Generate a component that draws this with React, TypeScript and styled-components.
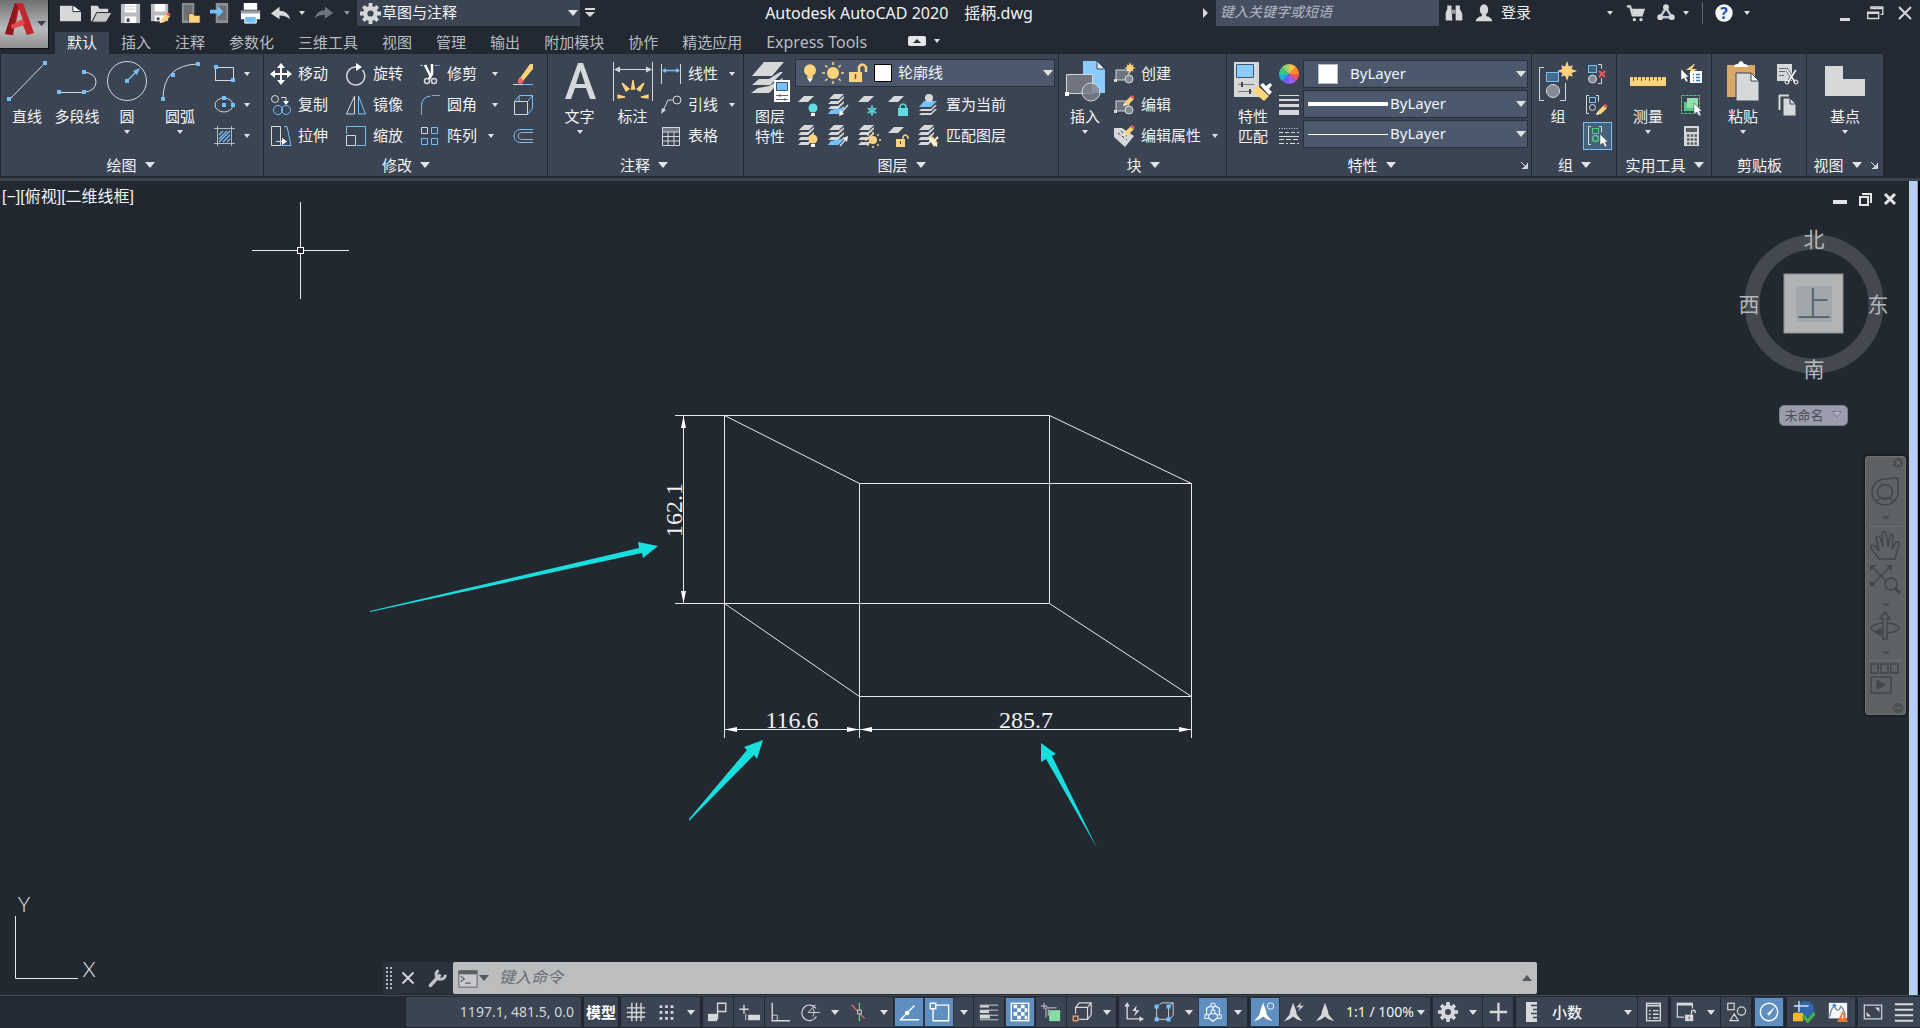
import React from "react";
import styled, { createGlobalStyle, css } from "styled-components";

const c = {
  chrome: "#222933",
  canvas: "#212830",
  panel: "#3b4453",
  combo: "#4c596d",
  line: "#222933",
  text: "#f2f3f4",
  tab: "#b9bcc0",
  g: "#d6d8da",
  b: "#74c0f8",
  y: "#ffd27c",
  active: "#5f8ec1",
};

const Global = createGlobalStyle`
  * { box-sizing: border-box; }
  body { margin: 0; background: ${c.canvas}; overflow: hidden; }
  body, button, input, select {
    font-family: "Noto Sans", "Noto Sans CJK SC", sans-serif;
    font-size: 15px;
    line-height: 20px;
    color: ${c.text};
  }
  button { background: none; border: 0; padding: 0; cursor: default; white-space: nowrap; }
  svg { display: block; flex: none; }
`;

/* ---------- icons ---------- */

const G = c.g;
const B = c.b;
const Y = c.y;

const dot = (x: number, y: number, s = 4) => (
  <rect x={x - s / 2} y={y - s / 2} width={s} height={s} fill={B} stroke="none" />
);
const sheet = (y: number, fill = G) => (
  <path d={`M7 ${y}h10l-6 6H1z`} fill={fill} stroke="none" />
);
const sheets = (
  <>
    <path d="M7 1h10l-5 5H2z" fill={G} stroke="none" />
    <path d="M4 8l-3 3h10l6-6v-2l-6 5zM4 13l-3 3h10l6-6v-2l-6 5zM4 18l-3 3h10l6-6v-2l-6 5z" fill={G} stroke="none" />
  </>
);
const sun = (x: number, y: number, r: number, k: number) => (
  <g>
    <circle cx={x} cy={y} r={r} fill={Y} stroke="none" />
    <path
      stroke={Y}
      strokeWidth="1.500"
      d={Array.from({ length: 8 }, (_, i) => {
        const a = (i * Math.PI) / 4;
        const s = Math.sin(a);
        const t = Math.cos(a);
        return `M${x + (r + 2) * s} ${y + (r + 2) * t}L${x + k * s} ${y + k * t}`;
      }).join("")}
    />
  </g>
);
const pencil = (x: number, y: number) => (
  <g transform={`translate(${x} ${y})`} stroke="none">
    <path d="M0 10l2-4 6-6 3 3-6 6z" fill={Y} />
    <path d="M7 1l1.500-1.500q2-1 3 1.500l-1.500 2z" fill="#f0585c" />
    <path d="M0 10l1.500-3 1.500 1.500z" fill="#fff" />
  </g>
);
const pointer = (x: number, y: number) => (
  <path transform={`translate(${x} ${y})`} d="M0 0v11l3-2 2 4 2-1-2-4h3z" fill="#fff" stroke={c.panel} strokeWidth=".5" />
);
const star = (x: number, y: number, r: number) => {
  const pts = Array.from({ length: 16 }, (_, i) => {
    const a = (i * Math.PI) / 8;
    const k = i % 2 ? r * 0.5 : i % 4 ? r * 0.82 : r;
    return `${(x + k * Math.sin(a)).toFixed(1)},${(y - k * Math.cos(a)).toFixed(1)}`;
  }).join(" ");
  return <polygon points={pts} fill={Y} stroke="none" />;
};
const block = (
  <>
    <rect x="4" y="8" width="13" height="10" fill="#6d7380" />
    <circle cx="17" cy="17" r="4" fill="#858b95" />
    <rect x="2" y="17" width="3" height="3" fill={G} stroke="none" />
  </>
);
const gear = (fill: string) => (
  <g>
    <circle cx="12" cy="12" r="5.500" fill="none" stroke={fill} strokeWidth="4.500" />
    <path
      stroke={fill}
      strokeWidth="4"
      d="M12 1v5M12 18v5M1 12h5M18 12h5M4.500 4.500l3 3M16.500 16.500l3 3M4.500 19.500l3-3M16.500 7.500l3-3"
    />
  </g>
);
const compass = <path d="M12 2l3 8 1 5 6 7-6-2-4-3-4 3-6 2 6-7 1-5z" fill="currentColor" stroke="none" />;

const small: Record<string, React.ReactNode> = {
  rect: (<><rect x="3.500" y="5.500" width="18" height="13" />{dot(4, 5)}{dot(21, 18)}</>),
  ellipse: (<><ellipse cx="12" cy="12" rx="9" ry="7" />{dot(12, 5)}{dot(12, 12)}{dot(21, 12)}</>),
  hatch: (<><path d="M5.500 2v20M19.500 2v20M2 4.500h21M2 19.500h21" stroke="#b4b9c0" /><path d="M7 11l4-4M7 15l8-8M7 18l11-11M11 18l7-7M15 18l3-3" stroke={B} strokeWidth="1.300" /></>),
  move: (<><path d="M12 4v16M4 12h16" strokeWidth="2" stroke="#fff" /><path d="M12 1l4 5H8zM12 23l4-5H8zM1 12l5-4v8zM23 12l-5-4v8z" fill="#fff" stroke="none" /></>),
  rotate: (<><path d="M18.500 7A9 9 0 1 1 12 4" transform="translate(0 1)" strokeWidth="1.500" /><path d="M12 1l6 4-6 4z" fill="#fff" stroke="none" /></>),
  trim: (<><path d="M2 3.500h7M17 3.500h5" stroke={B} strokeDasharray="3 1" /><path d="M7 3l6 12M14 2v10l-3 5" stroke="#fff" strokeWidth="2.500" /><circle cx="9" cy="19" r="2.500" strokeWidth="1.500" /><circle cx="16" cy="19" r="2.500" strokeWidth="1.500" /></>),
  erase: (<><path d="M9 16L19 2h3v5L12 19z" fill={Y} stroke="none" /><path d="M9 15l4 4q-2 4-6 2-1-3 2-6z" fill="#f2666a" stroke="none" /><path d="M2 22.500h10" /><path d="M12 22.500h10" stroke={B} /></>),
  copy: (<><circle cx="6" cy="6" r="3.500" /><path d="M12 4.500h5v4" /><path d="M14 8h6l-3 4z" fill="#fff" stroke="none" /><circle cx="9" cy="17" r="4.500" stroke={B} /><circle cx="17" cy="17" r="4.500" stroke={B} /></>),
  mirror: (<><path d="M10.500 3v18H2.500z" /><path d="M14.500 3v18h7z" stroke={B} /></>),
  fillet: (<><path d="M3.500 22v-9q0-9 9-10" stroke={B} /><path d="M3.500 22v-8M14 2.500h8" stroke="#98a4b2" /></>),
  box: (<><path d="M3.500 8.500h13v13h-13z" /><path d="M3.500 8.500l5-6h13v13l-5 6M16.500 8.500l5-6M8 8V3" stroke={B} /></>),
  stretch: (<><path d="M2.500 2.500h9v19h-9z" /><path d="M15 2.500h3l4 19H12" stroke={B} /><path d="M7 17.500h8" /><path d="M13 14l5 3.500-5 3.500z" fill="#fff" stroke="none" /></>),
  scale: (<><path d="M2.500 10V2.500h19v19h-9" stroke={B} /><path d="M2.500 11.500h9v10h-9z" /></>),
  array: (<><path d="M3.500 3.500h6v6h-6z" /><path d="M13.500 3.500h6v6h-6zM3.500 14.500h6v6h-6zM13.500 14.500h6v6h-6z" stroke={B} /></>),
  offset: (<><path d="M22 5.500H9q-6 1-6 6.500t6 6.500h13" stroke={B} /><path d="M22 8.500H11q-4 0-4 3.500t4 3.500h11" stroke="#aab0b8" /></>),
  linear: (<><path d="M2.500 2v20M21.500 2v20" /><path d="M4 8.500h16" stroke={B} strokeWidth="1.500" /><path d="M3 8.500l4-2.500v5zM21 8.500l-4-2.500v5z" fill={B} stroke="none" /></>),
  leader: (<><circle cx="18" cy="7" r="4" /><path d="M14 7H9l-5 11" /><path d="M2 21l1-6 4 2z" fill={G} stroke="none" /></>),
  table: (<><path d="M3.500 3.500h17v4.500h-17z" fill="#727a85" /><path d="M3.500 3.500h17v18h-17zM3.500 12.500h17M3.500 17h17M9 8v13M15 8v13" /></>),
  layOff: (<>{sheet(3)}<circle cx="16" cy="15" r="4.500" fill="#5fdbe4" stroke="none" /><path d="M14 20h4v3h-4z" fill="#fff" stroke="none" /></>),
  layIso: (<>{sheets}<path d="M4 17l-3 4h10l6-6h-3z" fill={B} stroke="none" /><path d="M21 12l-7 8" strokeWidth="1.500" /><path d="M12 23l1-6 4 4z" fill="#fff" stroke="none" /></>),
  layFreeze: (<>{sheet(3)}<path d="M15 12v11M10.500 15l9 5M10.500 20l9-5" stroke="#5fdbe4" strokeWidth="1.300" /><circle cx="15" cy="17.500" r="3" stroke="#5fdbe4" /></>),
  layLock: (<>{sheet(3)}<path d="M11 15h10v8H11z" fill="#5fdbe4" stroke="none" /><path d="M13 15v-2q3-4 6 0v2" stroke="#5fdbe4" strokeWidth="1.500" /></>),
  layCur: (<><path d="M7 8h13l-6 6H2z" fill={B} stroke="none" /><circle cx="12" cy="5" r="4" fill={G} stroke="none" /><path d="M4 16l-2 2h12l6-6h-2l-4 4zM4 20l-2 2h12l6-6h-2l-4 4z" fill={G} stroke="none" /></>),
  layOn: (<>{sheets}<circle cx="16" cy="15" r="4.500" fill={Y} stroke="none" /><path d="M14 20h4v3h-4z" fill="#fff" stroke="none" /></>),
  layUniso: (<>{sheets}<path d="M4 17l-3 4h10l6-6h-3z" fill={B} stroke="none" /><path d="M13 22l6-7" strokeWidth="1.500" /><path d="M21 12l-1 6-4-4z" fill="#fff" stroke="none" /></>),
  layThaw: (<>{sheets}{sun(16, 16, 4, 8)}</>),
  layUnlock: (<>{sheet(3)}<path d="M9 15h9v8H9z" fill={Y} stroke="none" /><path d="M16 15v-2q2-4 5 0v2" stroke={Y} strokeWidth="1.500" /><path d="M13.500 17v3" stroke={c.panel} /></>),
  layMatch: (<>{sheets}<path d="M11 14l4-2 6 7-4 4z" fill={Y} stroke="none" /><path d="M12 14l8 8M21 13l-4 4" stroke="#fff" strokeWidth="2" /></>),
  create: (<>{block}{star(18, 6, 6)}</>),
  editBlock: (<>{block}{pencil(11, 3)}</>),
  editAttr: (<><path d="M2 4h8l12 8-9 11L2 13z" fill={G} stroke="none" /><path d="M6 9l9 7M9 7l7 6" stroke={c.panel} strokeDasharray="3 2" />{pencil(11, 2)}</>),
  wheel: (<g stroke="none">{["#ffc247", "#ff8a3d", "#f0555a", "#a35cf0", "#6f5bf5", "#1fb3d6", "#3ac584", "#9bd06a"].map((f, i) => {
    const a = (i * Math.PI) / 4;
    const e = ((i + 1) * Math.PI) / 4;
    return <path key={f} fill={f} d={`M12 12L${12 + 10 * Math.sin(a)} ${12 - 10 * Math.cos(a)}A10 10 0 0 1 ${12 + 10 * Math.sin(e)} ${12 - 10 * Math.cos(e)}z`} />;
  })}</g>),
  weights: (<path d="M2 2h20v1H2zM2 6h20v2H2zM2 11h20v3H2zM2 17h20v5H2z" fill={G} stroke="none" />),
  types: (<><path d="M2 4.500h20" strokeDasharray="1 1.500" /><path d="M2 8.500h20" strokeDasharray="4 2" /><path d="M2 12.500h20" /><path d="M2 15.500h20" strokeDasharray="5 2" /><path d="M2 19.500h20" strokeDasharray="5 2 2 2" /></>),
  ungroup: (<><rect x="4.500" y="3.500" width="8" height="7" stroke={B} fill="#44607a" /><circle cx="8.500" cy="17" r="4" fill="#858b95" /><path d="M14 2.500h3.500v4M17.500 16v5.500H14" /><path d="M15 9l6 6M21 9l-6 6" stroke="#f0585c" strokeWidth="2" /></>),
  groupEdit: (<><path d="M5 2.500H2.500v18H5M12 2.500h2.500v6" /><rect x="5.500" y="4.500" width="6" height="5" stroke={B} /><circle cx="8.500" cy="14.500" r="3" />{pencil(12, 12)}</>),
  groupSel: (<><path d="M5 2.500H2.500v18H5M13 2.500h2.500v6" /><rect x="6.500" y="4.500" width="6" height="5" stroke="#54c982" /><circle cx="9.500" cy="14.500" r="3" stroke="#54c982" strokeWidth="1.500" />{pointer(14, 10)}</>),
  qselect: (<><path d="M12 2L4 8h5l-2 5 8-6h-5l3-5z" fill={Y} stroke="none" transform="translate(3 0)" /><path d="M11 9h12v12H11z" fill="#fff" stroke="none" /><path d="M14 12.500h1M14 15.500h1M14 18.500h1M17 12.500h4M17 15.500h4M17 18.500h4" stroke="#2f80c8" strokeWidth="1.500" />{pointer(2, 7)}</>),
  selAll: (<><rect x="2.500" y="2.500" width="18" height="18" stroke="#54c982" strokeDasharray="3 1" /><path d="M5 9h10v9H5z" fill="#54c982" stroke="none" /><path d="M8 5h11v10H8z" fill="#8fe0ac" stroke="none" />{pointer(15, 10)}</>),
  calc: (<><path d="M5 2h15v20H5z" fill={G} stroke="none" /><path d="M7 4h11v4H7z" fill="#5a5f66" stroke="none" /><path d="M8 11.500h10M8 15.500h10M8 19.500h10" stroke="#5a5f66" strokeWidth="2.500" strokeDasharray="2.500 1.200" /></>),
  cut: (<><path d="M2 2h15v17H2z" fill={G} stroke="none" /><path d="M4 6.500h9M4 9.500h6M4 13.500h5" stroke="#666b72" /><path d="M12 8l8 12M21 8l-8 12" stroke={c.panel} strokeWidth="3" /><path d="M12 8l8 12M21 8l-8 12" stroke="#fff" strokeWidth="1.500" /><circle cx="12" cy="20" r="2" stroke="#fff" /><circle cx="21" cy="20" r="2" stroke="#fff" /></>),
  copyClip: (<><path d="M4 2.500h10M4.500 2v15" strokeWidth="2" /><path d="M8 5h7l6 6v12H8z" fill={G} stroke={c.panel} /><path d="M15 5v6h6" fill="none" stroke={c.panel} /></>),

  file: (<><path d="M1 4h13l9 6v10H1z" fill={G} stroke="none" /><path d="M14.500 3v7h9z" fill="#fff" stroke={c.chrome} /></>),
  open: (<><path d="M2 20V4h7l2 3h9v4H8L3 20z" fill={G} stroke="none" /><path d="M8 11h16l-6 10H3z" fill="#c4c6c8" stroke={c.chrome} /></>),
  save: (<><path d="M2 2h20v20H2z" fill="#b9bbbe" stroke="none" /><path d="M6 2h12v9H6zM6 15h12v7H6z" fill="#fff" stroke="none" /><path d="M7 4.500h10M7 7.500h10" stroke="#c9cbcd" /><path d="M8 17h3v4H8z" fill="#3f4650" stroke="none" /></>),
  saveAs: (<><path d="M2 2h18v18H2z" fill="#b9bbbe" stroke="none" /><path d="M6 2h11v8H6zM6 14h10v6H6z" fill="#fff" stroke="none" /><path d="M8 16h3v3H8z" fill="#3f4650" stroke="none" />{pencil(11, 12)}</>),
  mobOpen: (<><path d="M3 1h13v21H3z" fill="#8b8f94" stroke="none" /><path d="M5 3h9v16H5z" fill="#6b6f74" stroke="none" /><path d="M10 22V12h5l1 2h6v8z" fill={Y} stroke={c.chrome} strokeWidth=".6" /></>),
  mobSave: (<><path d="M7 1h13v21H7z" fill="#8b8f94" stroke="none" /><path d="M9 4h9v15H9z" fill="#6b6f74" stroke="none" /><path d="M1 8h8V4l6 6-6 6v-4H1z" fill={B} stroke="none" /></>),
  print: (<><path d="M5 1h14v7H5zM2 9h20v9H2z" fill="#fff" stroke="none" /><path d="M2 9h20v3H2z" fill="#9da0a4" stroke="none" /><path d="M6 15h12v7H6z" fill={B} stroke="#fff" /></>),
  undo: (<path d="M2 12l9-7v4q9 0 11 9-4-4-11-4v4z" fill={G} stroke="none" />),
  redo: (<path d="M22 12l-9-7v4q-9 0-11 9 4-4 11-4v4z" fill="#6e747d" stroke="none" />),
  gear: gear(G),
  find: (<><path d="M4 3h5v4H4zM14 3h5v4h-5zM2 12l2-5h5l1 14H2zM14 7h5l3 6v8h-8z" fill={G} stroke="none" /><path d="M9 8h5v5H9z" fill="#9a9da2" stroke="none" /></>),
  user: (<><ellipse cx="12" cy="8" rx="5" ry="6.500" fill={G} stroke="none" /><path d="M2 22q1-5 7-6l1-3h4l1 3q6 1 7 6z" fill={G} stroke="none" /></>),
  cart: (<><path d="M1 4h4l3 11h12" strokeWidth="2.500" /><path d="M7 7h16l-3 8H9z" fill={G} stroke="none" /><circle cx="10" cy="20" r="2" fill={G} stroke="none" /><circle cx="18" cy="20" r="2" fill={G} stroke="none" /></>),
  a360: (<><path d="M12 6L5 17h14z" strokeWidth="3" stroke="#bcc3d6" /><circle cx="12" cy="5" r="3.500" fill={G} stroke="none" /><circle cx="5" cy="17" r="3.500" fill={G} stroke="none" /><circle cx="19" cy="17" r="3.500" fill={G} stroke="none" /></>),
  help: (<><circle cx="12" cy="12" r="9.500" fill="#f3f5f9" stroke="none" /><text x="12" y="18" textAnchor="middle" fontSize="17" fontWeight="700" fill="#1f4fa8" stroke="none">?</text></>),
  min: (<path d="M7 17h10v3H7z" fill={G} stroke="none" />),
  restore: (<><path d="M7.500 8V5.500h13v8H18" strokeWidth="1.500" /><path d="M4 11h12v7H4z" strokeWidth="1.500" /><path d="M4 12h12M8 7h12" strokeWidth="2" /></>),
  close: (<path d="M6 6l12 12M18 6L6 18" strokeWidth="2" />),

  sGrid: (<path d="M7.500 2v20M12.500 2v20M17.500 2v20M2 7.500h20M2 12.500h20M2 17.500h20" strokeWidth="1.500" />),
  sSnap: (<path d="M5 6h15M5 12.500h15M5 19h15" strokeWidth="3" strokeDasharray="3 3" />),
  sInfer: (<><path d="M1 14h10v8H1z" fill={G} stroke="none" /><path d="M11.500 20V2.500h9v9h-9" strokeWidth="1.500" /></>),
  sDyn: (<><path d="M6.500 4v10M1.500 9h10" strokeWidth="1.500" /><path d="M11 15h13v6H11z" fill={G} stroke="none" /><path d="M8.500 14v7" /></>),
  sOrtho: (<><path d="M3.500 2v19.500H23" strokeWidth="1.500" /><path d="M4 15.500h5v6" /></>),
  sPolar: (<><path d="M18.500 8A8.500 8.500 0 1 0 19 17" strokeWidth="1.300" /><path d="M10 12.500h13M10 12.500L18 4M15 8l2 4-2 5" /></>),
  sIso: (<><path d="M4 4l14 15" stroke="#e0646a" strokeWidth="1.500" /><path d="M12.500 2v20" stroke="#54c982" strokeWidth="1.500" /><rect x="10.500" y="10" width="4" height="4" fill={c.panel} /></>),
  sTrack: (<><path d="M2 20.500h21M3 20L18 5" strokeWidth="1.500" /><circle cx="10" cy="13" r="2.500" fill="#fff" stroke="none" /></>),
  sOsnap: (<><path d="M9 4.500h13.500v17h-17V9" strokeWidth="1.500" /><path d="M2.500 2.500h6v6h-6z" strokeWidth="1.500" /></>),
  sLwt: (<><path d="M2 4.500h20M2 10h20M2 15.500h20M2 20.500h20" /><path d="M2 5h10v2H2zM2 10h10v3H2zM2 15h11v4H2z" fill={G} stroke="none" /></>),
  sTransp: (<><rect x="2.500" y="2.500" width="19" height="19" strokeWidth="1.500" /><path d="M5 4h4v4H5zM13 4h4v4h-4zM9 8h4v4H9zM17 8h3v4h-3zM5 12h4v4H5zM13 12h4v4h-4zM9 16h4v4H9zM17 16h3v4h-3z" fill="#fff" stroke="none" /></>),
  sCycle: (<><path d="M4.500 2v7M1 5.500h7M6.500 18V7.500H18M9 16V9" /><path d="M10 10h12v12H10z" fill="#84dda4" stroke="none" /></>),
  s3d: (<><path d="M5 14V7l4-5h13v13l-4 5H9M5 7h13v13M18 7l4-5" strokeWidth="1.300" /><rect x="2.500" y="16.500" width="5" height="5" stroke="#e8a27c" strokeWidth="1.500" /></>),
  sUcs: (<><path d="M4.500 5v14.500H20" strokeWidth="1.500" /><path d="M4.500 1l3 5h-6zM23 19.500l-5-3v6z" fill={G} stroke="none" /><path d="M15 5l-5 6h4l-2 6 6-7h-4z" fill={G} stroke="none" /></>),
  sFilter: (<><path d="M4 5v14M6 20h11M17 6v12M7 4l3-2h12v14l-3 3M18 5l4-3" /><path d="M2 4h4v4H2zM15 4h4v4h-4zM2 18h4v4H2zM15 18h4v4h-4z" fill={B} stroke={B} strokeWidth=".5" /></>),
  sGizmo: (<><path d="M12 5v7M5 17V8l7-4 7 4v9M12 12L5 17l7 5 7-5z" strokeWidth="1.300" /><path d="M10 2.500h4v4h-4zM10 10h4v4h-4zM3 15h4v4H3zM17 15h4v4h-4z" fill={c.active} /></>),
  sAnno: (<g transform="translate(-2 0)">{compass}<circle cx="20" cy="5.500" r="3.500" /></g>),
  sAuto: (<g transform="translate(-2 0)">{compass}<path d="M21 1l-6 6h4l-2 5 7-7h-4z" fill={G} stroke={c.panel} strokeWidth=".5" /></g>),
  sScale: compass,
  sPlus: (<path d="M12.500 2v20M3 12h19" strokeWidth="2.500" />),
  sRuler: (<><path d="M7 2h11v20H7z" fill={G} stroke="none" /><path d="M12 5.500h6M14 9.500h4M12 13.500h6M14 17.500h4" stroke={c.panel} strokeWidth="1.500" /></>),
  sProps: (<><rect x="5" y="2.500" width="15" height="19" strokeWidth="1.500" /><path d="M5 5h15" strokeWidth="2" /><path d="M7.500 10.500h2M7.500 14.500h2M7.500 18.500h2M12 10.500h6M12 14.500h6M12 18.500h6" strokeWidth="1.500" /></>),
  sLock: (<><path d="M19 8V2.500H2.500v15H10" strokeWidth="1.300" /><path d="M2 3.500h17" strokeWidth="3" /><path d="M11 15h9v7h-9z" fill={G} stroke="none" /><path d="M18 15v-4q2-2 4 0v2" strokeWidth="1.500" /><path d="M15.500 17v3" stroke={c.panel} /></>),
  sIsolate: (<><rect x="3" y="2.500" width="7" height="7" strokeWidth="1.300" /><circle cx="18" cy="11" r="4.500" strokeWidth="1.300" /><path d="M10 14l4.500 7.500h-9z" strokeWidth="1.300" /></>),
  sHw: (<><circle cx="12" cy="12" r="9.500" strokeWidth="1.500" /><path d="M10 14l9-8-7 10z" fill="#fff" stroke="none" /></>),
  sCloud: (<><circle cx="14" cy="9" r="9" fill="#3266a8" stroke="none" /><path d="M0 14q2-2 6-1h5v9H0z" fill="#f5b72e" stroke="none" /><path d="M1 5.500h16M6.500 0v12" stroke="#cfe3f7" strokeWidth="1.500" /><path d="M11 16l5 6 8-9" stroke="#42b04a" strokeWidth="3.500" /></>),
  sDoc: (<><path d="M2 2h20v17H2z" fill="#f4f6f7" stroke="none" /><path d="M3 17Q5 6 8 6q4 8 7 0 3 2 5 10" stroke="#7b8590" strokeWidth="1.500" /><circle cx="8" cy="5" r="2" fill="#3b8fe0" stroke="none" /><path d="M17 11l6 12H11z" fill="#e37736" stroke="none" /><path d="M17 15v4" stroke="#fff" strokeWidth="1.500" /></>),
  sFull: (<><rect x="2.500" y="4.500" width="19" height="15" strokeWidth="1.300" /><path d="M14 7h5v5zM5 17v-5l5 5z" fill={G} stroke="none" /></>),
  sMenu: (<path d="M2 3.500h20M2 9.500h20M2 15.500h20M2 21.500h20" strokeWidth="2" />),

  bulb: (<><circle cx="12" cy="9" r="6.500" fill={Y} stroke="none" /><path d="M9 15h6v3H9z" fill={Y} stroke="none" /><path d="M9 18h6l-3 4z" fill="#fff" stroke="none" /></>),
  sunny: sun(12, 12, 6, 11),
  unlock: (<><path d="M4 11h13v10H4z" fill={Y} stroke="none" /><path d="M14 11V6q3-5 7 0v5" stroke={Y} strokeWidth="2.500" /><path d="M10.500 13v5" stroke={c.combo} strokeWidth="1.500" /></>),
  prompt: (<><path d="M2 4h20v18H2z" fill="#c9cacc" stroke="#5c5f63" /><path d="M2 4h20v4H2z" fill="#5c5f63" stroke="none" /><path d="M4 10l4 3-4 3M9 17.500h6" stroke="#5c5f63" strokeWidth="1.300" /></>),
  wrench: (<><path d="M4 21L15 9" stroke="#bfc3c7" strokeWidth="4" strokeLinecap="round" /><path d="M14 3a5.500 5.500 0 1 0 8 5" stroke="#bfc3c7" strokeWidth="3.500" /></>),
};

const big: Record<string, React.ReactNode> = {
  line: (<><path d="M3 38L38 2" />{dot(2, 38)}{dot(38, 2)}</>),
  pline: (<><path d="M1 31.500h26q12-2 12-10.500T27 11" />{dot(2, 31)}{dot(27, 31)}{dot(27, 11)}</>),
  circle: (<><circle cx="20" cy="20" r="19.500" /><path d="M20 20l10-10" stroke={B} strokeWidth="1.500" /><path d="M33 7l-7 3 4 4z" fill={B} stroke="none" />{dot(20, 20)}</>),
  arc: (<><path d="M3 38Q3 4 38 3" />{dot(3, 38)}{dot(13, 14)}{dot(38, 3)}</>),
  text: (<path d="M18 2h5l13 36h-6l-4-11H15l-4 11H5zM20.500 9L16 23h9z" fill={G} stroke="none" fillRule="evenodd" />),
  dim: (<><path d="M.5 1v39M39.500 1v39M2 8.500h36" /><path d="M1 8.500l6-3v6zM39 8.500l-6-3v6z" fill={G} stroke="none" /><path d="M18.500 28L20 19l1.500 9zM13 30l-4-8 7 6zM27 30l4-8-7 6zM12 36l-7-2v3zM28 36l7-2v3z" fill={Y} stroke={Y} strokeWidth="1.300" /></>),
  layers: (<><path d="M14 1h20L22 15H2zM9 18l-7 6h18l13-13h-3L19 18zM8 27l-7 5h18l14-14v-1L19 25z" fill={G} stroke="none" /><path d="M24 19h16v22H24z" fill="#fff" stroke="none" /><path d="M26.500 21.500h11v8h-11z" fill={B} stroke="#40566d" /><path d="M26 34.500h12M26 38.500h12M30 33v3M35 37v3" stroke="#666" /></>),
  insert: (<><path d="M18 0h14l8 8v24H18z" fill="#8accff" stroke="none" /><path d="M32 0v8h8z" fill="#dff1ff" stroke={c.panel} /><path d="M1.500 13.500h26v19h-26z" fill="#70757f" /><circle cx="26" cy="31" r="9" fill="#7d838d" fillOpacity=".8" /><path d="M0 31h4v4H0z" fill="#fff" stroke="none" /></>),
  match: (<><path d="M1 1h25v35H1z" fill={G} stroke="none" /><path d="M3.500 3.500h17v13h-17z" fill="#8accff" stroke="#40566d" /><path d="M5 23.500h16M5 30.500h14" stroke="#777" /><path d="M9 21v5M17 28v5" stroke="#444" strokeWidth="2" /><path d="M19 30l6-5 11 10-5 5z" fill={Y} stroke="none" /><path d="M27 24l3-2 3 3 4-3 2 2-3 4 3 3-3 3z" fill="#fff" stroke="none" /></>),
  group: (<><path d="M6 6.500H1.500v33H6M22 39.500h5.500V22" /><rect x="8.500" y="11.500" width="12" height="9" stroke={B} fill="#486a8c" /><circle cx="15" cy="30" r="6.500" fill="#858b95" />{star(29, 10, 10)}</>),
  measure: (<><path d="M2 16h36v9H2z" fill={Y} stroke="none" /><path d="M5.500 16v4M9.500 16v3M13.500 16v4M17.500 16v3M21.500 16v4M25.500 16v3M29.500 16v4M33.500 16v3" stroke="#6b5a34" /></>),
  paste: (<><path d="M4 4h28v32H4z" fill="#d9a868" stroke="none" /><path d="M11 6q0-3 4-3 1-3 3-3t3 3q4 0 4 3z" fill="#fff" stroke="none" /><path d="M13 12h15l8 8v20H13z" fill={G} stroke={c.panel} /><path d="M28 12v8h8z" fill="#fff" stroke={c.panel} /></>),
  base: (<path d="M0 5h18v13h22v17H0z" fill={G} stroke="none" />),
};

const Icon = ({ name, size = 24 }: { name: string; size?: number }) => (
  <svg width={size} height={size} viewBox="0 0 24 24" fill="none" stroke={G} aria-hidden="true">
    {small[name]}
  </svg>
);
const BigIcon = ({ name }: { name: string }) => (
  <svg width="40" height="42" viewBox="0 0 40 42" fill="none" stroke={G} aria-hidden="true">
    {big[name]}
  </svg>
);
const Caret = ({ w = 6, fill = "#e0e2e4" }: { w?: number; fill?: string }) => (
  <svg width={w} height={Math.ceil(w / 2) + 1} viewBox="0 0 10 6" preserveAspectRatio="none" aria-hidden="true">
    <path d="M0 0h10L5 6z" fill={fill} />
  </svg>
);

/* ---------- title bar ---------- */

const Shell = styled.div`
  display: flex;
  flex-direction: column;
  height: 100vh;
  background: ${c.canvas};
`;
const Header = styled.header`
  display: flex;
  height: 54px;
  background: ${c.chrome};
`;
const AppButton = styled.button`
  width: 49px;
  height: 49px;
  display: flex;
  align-items: center;
  justify-content: center;
  background: linear-gradient(#6f7072, #b9babb 60%, #8d8e90);
  border-right: 1px solid #111;
  border-bottom: 1px solid #111;
`;
const HeaderRows = styled.div`
  flex: 1;
  min-width: 0;
`;
const TitleBar = styled.div`
  display: flex;
  height: 26px;
  align-items: center;
  padding-left: 6px;
`;
const Tool = styled.button<{ $w?: number }>`
  width: ${(p) => p.$w ?? 30}px;
  height: 26px;
  display: flex;
  flex: none;
  align-items: center;
  justify-content: center;
`;
const Workspace = styled.div`
  display: flex;
  align-items: center;
  width: 223px;
  height: 26px;
  margin-left: 2px;
  padding: 0 2px;
  background: ${c.panel};
`;
const PlainSelect = styled.select`
  appearance: none;
  flex: 1;
  min-width: 0;
  height: 22px;
  padding: 0 0 2px;
  border: 0;
  outline: 0;
  background: transparent;
`;
const Title = styled.h1`
  flex: 1;
  display: flex;
  justify-content: center;
  gap: 16px;
  margin: 0;
  font-size: 16px;
  font-weight: 400;
  line-height: 28px;
`;
const Search = styled.input`
  width: 223px;
  height: 26px;
  margin-left: 4px;
  padding: 0 4px 4px;
  border: 0;
  background: #464f61;
  font-size: 14px;
  font-style: italic;
  &::placeholder { color: #b4b8c0; opacity: 1; }
`;
const Login = styled.button`
  width: 103px;
  padding: 0 0 2px 2px;
  text-align: left;
`;
const Rule = styled.span`
  width: 1px;
  height: 22px;
  margin: 0 7px 0 8px;
  background: #5a6273;
`;
const WindowButtons = styled.div`
  display: flex;
  margin-left: 74px;
`;
const Tabs = styled.nav`
  display: flex;
  align-items: stretch;
  height: 22px;
  margin-top: 6px;
  padding-left: 6px;
`;
const Tab = styled.button<{ $on?: boolean; $latin?: boolean }>`
  padding: 0 12px 2px;
  font-size: ${(p) => (p.$latin ? 16 : 15)}px;
  color: ${(p) => (p.$on ? c.text : c.tab)};
  background: ${(p) => (p.$on ? c.panel : "transparent")};
`;
const RibbonToggle = styled.button`
  display: flex;
  align-items: center;
  gap: 8px;
  height: 18px;
  margin-left: 29px;
`;

/* ---------- ribbon ---------- */

const Ribbon = styled.section`
  display: flex;
  gap: 1px;
  height: 127px;
  padding: 0 0 5px 1px;
  background: ${c.chrome};
  box-shadow: inset 0 -3px ${c.panel};
`;
const PanelBox = styled.div<{ $w: number; $pad?: number }>`
  display: flex;
  flex-direction: column;
  flex: none;
  width: ${(p) => p.$w}px;
  padding: 4px 3px 0 ${(p) => p.$pad ?? 4}px;
  background: ${c.panel};
`;
const PanelBody = styled.div`
  display: flex;
  height: 93px;
`;
const PanelTitle = styled.button`
  display: flex;
  flex: 1;
  align-items: center;
  justify-content: center;
  gap: 8px;
  padding-top: 2px;
`;
const LaunchSpring = styled.span`
  flex: 1;
`;
const BigBtn = styled.button<{ $w: number }>`
  display: flex;
  flex: none;
  flex-direction: column;
  align-items: center;
  width: ${(p) => p.$w}px;
  padding-top: 3px;
`;
const BigLabel = styled.span`
  height: 20px;
  margin-top: 3px;
  margin-bottom: 4px;
  & + & { margin-top: -4px; }
`;
const Column = styled.div<{ $w?: number; $gap?: number }>`
  display: flex;
  flex: none;
  flex-direction: column;
  margin-left: ${(p) => p.$gap ?? 0}px;
  width: ${(p) => (p.$w ? `${p.$w}px` : "auto")};
`;
const Row = styled.div`
  display: flex;
  align-items: center;
  height: 31px;
`;
const Item = styled.button<{ $on?: boolean }>`
  display: flex;
  align-items: center;
  gap: 5px;
  height: 28px;
  padding: 0 1px;
  span { padding-bottom: 2px; }
  ${(p) =>
    p.$on &&
    css`
      padding: 0;
      width: 29px;
      justify-content: center;
      background: #46617c;
      border: 1px solid ${B};
    `}
`;
const Drop = styled.button<{ $w?: number; $h?: number }>`
  display: flex;
  flex: none;
  align-items: center;
  justify-content: center;
  width: ${(p) => p.$w ?? 28}px;
  height: ${(p) => p.$h ?? 24}px;
`;
const LayerIcons = styled.div`
  display: grid;
  grid-template-columns: repeat(4, 30px) auto;
  align-items: center;
  height: 31px;
  padding-left: 1px;
`;
const Combo = styled.div`
  display: flex;
  align-items: center;
  height: 28px;
  padding: 0 1px 0 3px;
  background: ${c.combo};
  border: 1px solid #29303b;
`;
const ComboCol = styled.div`
  display: flex;
  flex: 1;
  flex-direction: column;
  gap: 2px;
  padding-top: 2px;
`;
const LayerCombo = styled(Combo)`
  width: 260px;
  margin-bottom: 2px;
  margin-top: 1px;
`;
const Swatch = styled.span<{ $s: number; $l: number; $r: number }>`
  flex: none;
  width: ${(p) => p.$s}px;
  height: ${(p) => p.$s}px;
  margin: 0 ${(p) => p.$r}px 0 ${(p) => p.$l}px;
  background: #fff;
  border: 1px solid ${(p) => (p.$s > 18 ? "#b8bcc2" : "#000")};
`;
const Stroke = styled.span<{ $h: number }>`
  flex: none;
  width: 80px;
  height: ${(p) => p.$h}px;
  margin: 0 2px 0 1px;
  background: #fff;
`;

type PanelProps = { title: string; w: number; pad?: number; arrow?: boolean; launch?: boolean; children: React.ReactNode };
const Panel = ({ title, w, pad, arrow = true, launch, children }: PanelProps) => (
  <PanelBox $w={w} $pad={pad}>
    <PanelBody>{children}</PanelBody>
    <PanelTitle>
      {launch && w > 100 && <LaunchSpring />}
      <span>{title}</span>
      {arrow && <Caret w={10} />}
      {launch && w > 100 && <LaunchSpring />}
      {launch && (
        <svg width="8" height="8" viewBox="0 0 8 8" fill="none" stroke={G} aria-hidden="true">
          <path d="M1 1l4 4M7.500 2v5.500H2" />
          <path d="M7 3v4H3z" fill={G} stroke="none" />
        </svg>
      )}
    </PanelTitle>
  </PanelBox>
);
const Big = ({ icon, label, w, drop }: { icon: string; label: string[]; w: number; drop?: boolean }) => (
  <BigBtn $w={w}>
    <BigIcon name={icon} />
    {label.map((l) => <BigLabel key={l}>{l}</BigLabel>)}
    {drop && <Caret />}
  </BigBtn>
);
const Cmd = ({ icon, label, drop, on }: { icon: string; label?: string; drop?: number; on?: boolean }) => (
  <Row>
    <Item $on={on} aria-label={label ?? icon}>
      <Icon name={icon} />
      {label && <span>{label}</span>}
    </Item>
    {drop && <Drop $w={drop} aria-label="更多"><Caret /></Drop>}
  </Row>
);

/* ---------- drawing area ---------- */

const Workarea = styled.main`
  position: relative;
  flex: 1;
  min-height: 0;
  display: flex;
  background: ${c.canvas};
`;
const Sheet = styled.svg`
  flex: 1 1 0;
  min-width: 0;
  height: 100%;
`;
const Edge = styled.div`
  width: 11px;
  flex: none;
  background: linear-gradient(90deg, #b8d0ea 8px, #22c3ee 8px, #22c3ee 9px, #000 9px);
`;
const ViewLabel = styled.div`
  position: absolute;
  top: 6px;
  left: 2px;
  display: flex;
  button {
    font-family: "Liberation Sans", "Noto Sans CJK SC", sans-serif;
    font-size: 16px;
  }
`;
const ViewButtons = styled.div`
  position: absolute;
  top: 5px;
  right: 18px;
  display: flex;
`;
const CubeBox = styled.div`
  position: absolute;
  top: 46px;
  right: 31px;
  width: 152px;
  display: flex;
  flex-direction: column;
  align-items: center;
`;
const CubeArt = styled.svg`
  overflow: visible;
`;
const UcsMenu = styled.button`
  display: flex;
  align-items: center;
  justify-content: space-between;
  width: 69px;
  height: 21px;
  margin-top: 22px;
  padding: 0 5px 2px;
  border: 1px solid #7b7e8b;
  border-radius: 5px;
  background: #9a9dab;
  color: #4b4e58;
  font-size: 13px;
  line-height: 18px;
`;
const NavBar = styled.div`
  position: absolute;
  top: 275px;
  right: 14px;
  width: 41px;
  height: 259px;
  background: #5e6265;
  border: 1px solid #6e7275;
  border-radius: 3px;
  box-shadow: 0 0 2px 1px #14181d;
`;
const Ucs = styled.svg`
  position: absolute;
  left: 10px;
  bottom: 10px;
  overflow: visible;
`;
const CommandLine = styled.div`
  position: absolute;
  left: 383px;
  right: 383px;
  bottom: 1px;
  display: flex;
  align-items: center;
  height: 32px;
  background: #2b323e;
  border-radius: 3px;
`;
const CommandField = styled.label`
  display: flex;
  flex: 1;
  align-items: center;
  height: 32px;
  padding: 0 5px 0 4px;
  background: #bbbdbf;
  border-radius: 2px;
`;
const CommandInput = styled.input`
  flex: 1;
  height: 30px;
  padding: 0 0 2px;
  margin-left: 10px;
  border: 0;
  outline: 0;
  background: transparent;
  font-size: 16px;
  font-style: italic;
  color: #333;
  &::placeholder { color: #6c6f73; opacity: 1; }
`;

const Drawing = () => (
  <Sheet viewBox="0 181 1909 814" preserveAspectRatio="xMinYMin meet" fill="none" stroke="#e8e9ea" role="img" aria-label="图形">
    <path d="M252 250.500h97M300.500 202v97" />
    <rect x="297.500" y="247.500" width="6" height="6" fill={c.canvas} stroke="#fff" />
    <path d="M675 415.500h374.500v188H675M724.500 415.500v322.500" />
    <path d="M859.500 483.500h332v213h-332zM859.500 696v42M1191.500 696v42" />
    <path d="M724.500 415.500l135 68M1049.500 415.500l142 68M724.500 603.500l135 93M1049.500 603.500l142 93" />
    <path d="M683.500 416v187M725 729.500h467" />
    <path
      fill="#fff"
      stroke="none"
      d="M683.500 416l2.500 12h-5zM683.500 603l2.500-12h-5zM725 729.500l12-2.500v5zM859 729.500l-12-2.500v5zM860 729.500l12-2.500v5zM1191 729.500l-12-2.500v5z"
    />
    <g fill="#f0f0f0" stroke="none" fontFamily="'Liberation Serif', serif" fontSize="24" textAnchor="middle">
      <text x="792" y="728">116.6</text>
      <text x="1026" y="728">285.7</text>
      <text transform="translate(682 510) rotate(-90)">162.1</text>
    </g>
    <g fill="#18dede" stroke="none">
      <path d="M370 612v-1l269-63-1-6 20 4-15 12-1-5z" />
      <path d="M689 821v-2l58-69-3-3 19-7-6 19-3-4z" />
      <path d="M1097 848l-51-89-5 3v-19l15 11-4 2z" />
    </g>
  </Sheet>
);

const ViewCube = () => (
  <CubeBox>
    <CubeArt width="152" height="156" viewBox="0 0 152 156" aria-hidden="true">
      <circle cx="77" cy="77" r="62" fill="none" stroke="#43494f" strokeWidth="15" />
      <rect x="47" y="47" width="59" height="59" fill="#b1b3b5" stroke="#8a8d90" />
      <rect x="59" y="59" width="36" height="36" fill="#a2a7ac" />
      <g fontFamily="'Noto Sans CJK SC', sans-serif" textAnchor="middle">
        <text x="77" y="90" fontSize="35" fontWeight="300" fill="#53606b">上</text>
        <g fontSize="21" fill="#b4b6b8">
          <text x="77" y="20">北</text>
          <text x="12" y="85">西</text>
          <text x="141" y="85">东</text>
          <text x="77" y="150">南</text>
        </g>
      </g>
    </CubeArt>
    <UcsMenu>
      未命名
      <svg width="10" height="7" viewBox="0 0 10 7" fill="#b4b7c3" stroke="#777a88"><path d="M.5 .5h9L5 6z" /></svg>
    </UcsMenu>
  </CubeBox>
);

const Navigation = () => (
  <NavBar>
    <svg width="39" height="257" viewBox="0 0 39 257" fill="none" stroke="#42474c" aria-hidden="true">
      <g fill="#4a4f54" stroke="none">
        <circle cx="32" cy="6" r="5" />
        <circle cx="32" cy="251" r="5" />
        <path d="M16 59h8l-4 4zM16 146h8l-4 4zM16 194h8l-4 4z" />
      </g>
      <path d="M30 4l4 4M34 4l-4 4M29 251h6" stroke="#6e7275" />
      <path d="M3 69.500h33M3 203.500h33" stroke="#6b6f72" />
      <path d="M32 21v14a13 13 0 1 1-13-13z" strokeWidth="1.500" />
      <circle cx="19" cy="35" r="7.500" strokeWidth="1.500" />
      <path d="M10 44q9-7 18 0" strokeWidth="1.500" />
      <path d="M13 102l-8-11q-1-4 4-2l4 5-3-13q1-3 4-1l3 10-1-14q2-3 4 0l2 14 2-12q3-2 3 1l-1 13 4-7q3-1 3 2l-4 15z" strokeWidth="1.500" />
      <path d="M6 110l18 18M24 110L6 128" strokeWidth="1.500" />
      <path d="M4 108h6l-6 6zM26 108h-6l6 6zM4 129h6l-6-6z" fill="#42474c" stroke="none" />
      <circle cx="25" cy="127" r="6" strokeWidth="1.500" fill="#5e6265" />
      <path d="M29 131l5 5" strokeWidth="3" />
      <ellipse cx="19" cy="171" rx="14" ry="5" strokeWidth="1.500" />
      <path d="M17 182v-20h-3l5-7 5 7h-3v20z" strokeWidth="1.500" fill="#5e6265" />
      <path d="M9 175l6-4v8z" fill="#42474c" />
      <path d="M5 207h7v9H5zM15 207h7v9h-7zM25 207h7v9h-7zM5 220h20v16H5z" strokeWidth="1.500" />
      <path d="M11 223v9l8-4z" fill="#42474c" />
    </svg>
  </NavBar>
);

/* ---------- status bar ---------- */

const Status = styled.footer`
  display: flex;
  justify-content: flex-end;
  gap: 3px;
  height: 33px;
  padding: 1px 0;
  border-top: 1px solid #464b52;
  background: ${c.chrome};
`;
const Cluster = styled.div`
  display: flex;
  gap: 1px;
  height: 30px;
`;
const Cell = styled.div`
  display: flex;
  background: ${c.panel};
`;
const SBtn = styled.button<{ $on?: boolean; $w?: number }>`
  display: flex;
  align-items: center;
  justify-content: center;
  width: ${(p) => p.$w ?? 30}px;
  height: 30px;
  color: ${(p) => (p.$on ? "#fff" : G)};
  ${(p) =>
    p.$on &&
    css`
      background: ${c.active};
      border: 1px solid #2c3746;
      svg { stroke: #fff; }
    `}
`;
const Coords = styled.output`
  width: 175px;
  padding-right: 7px;
  background: ${c.panel};
  color: #d3d6da;
  font-size: 14px;
  line-height: 30px;
  text-align: right;
`;
const ModelBtn = styled(SBtn)`
  background: ${c.panel};
  color: #fff;
  font-weight: 700;
`;
const Units = styled.div`
  display: flex;
  align-items: center;
  width: 121px;
  padding: 0 5px 0 3px;
  background: ${c.panel};
  select { margin-left: 9px; font-weight: 500; padding: 0; }
`;
const ScaleBtn = styled.button`
  display: flex;
  align-items: center;
  justify-content: space-between;
  width: 90px;
  padding: 0 5px 0 6px;
  font-size: 14px;
`;

const S = ({ i, on, w }: { i: string; on?: boolean; w?: number }) => (
  <SBtn $on={on} $w={w} aria-label={i}><Icon name={i} size={22} /></SBtn>
);
const SDrop = () => <Drop $w={19} $h={30} aria-label="更多"><Caret w={8} /></Drop>;

const StatusBar = () => (
  <Status>
    <Coords>1197.1, 481.5, 0.0</Coords>
    <ModelBtn $w={34}>模型</ModelBtn>
    <Cluster><Cell><S i="sGrid" /><S i="sSnap" /><SDrop /></Cell></Cluster>
    <Cluster>
      <Cell><S i="sInfer" /></Cell>
      <Cell><S i="sDyn" /></Cell>
      <Cell><S i="sOrtho" /><S i="sPolar" /><SDrop /><S i="sIso" /><SDrop /></Cell>
      <Cell><S i="sTrack" on /><S i="sOsnap" on /><SDrop /></Cell>
      <Cell><S i="sLwt" /></Cell>
      <Cell><S i="sTransp" on /></Cell>
      <Cell><S i="sCycle" /></Cell>
      <Cell><S i="s3d" /><SDrop /></Cell>
    </Cluster>
    <Cluster><Cell><S i="sUcs" /><S i="sFilter" /><SDrop /><S i="sGizmo" on /><SDrop /></Cell></Cluster>
    <Cluster>
      <Cell>
        <S i="sAnno" on /><S i="sAuto" /><S i="sScale" />
        <ScaleBtn>1:1 / 100%<Caret w={8} /></ScaleBtn>
      </Cell>
    </Cluster>
    <Cluster><Cell><S i="gear" /><SDrop /></Cell><Cell><S i="sPlus" /></Cell></Cluster>
    <Cluster>
      <Units>
        <Icon name="sRuler" />
        <PlainSelect aria-label="单位"><option>小数</option></PlainSelect>
        <Caret w={8} />
      </Units>
      <Cell><S i="sProps" /></Cell>
    </Cluster>
    <Cluster><Cell><S i="sLock" /><SDrop /></Cell><Cell><S i="sIsolate" /></Cell></Cluster>
    <Cluster><Cell><S i="sHw" on /></Cell></Cluster>
    <Cluster><Cell><S i="sCloud" w={34} /><S i="sDoc" w={34} /></Cell></Cluster>
    <Cluster><Cell><S i="sFull" /><S i="sMenu" w={32} /></Cell></Cluster>
  </Status>
);

const tabs = ["默认", "插入", "注释", "参数化", "三维工具", "视图", "管理", "输出", "附加模块", "协作", "精选应用", "Express Tools"];
const quick = ["file", "open", "save", "saveAs", "mobOpen", "mobSave", "print", "undo"];

export default function App() {
  return (
    <Shell>
      <Global />
      <Header>
        <AppButton aria-label="应用程序菜单">
          <svg width="48" height="48" viewBox="0 0 48 48" aria-hidden="true">
            <path d="M5 34L15 3h8l11 30-7 2-4-10-9 3-2 7z" fill="#c3272b" />
            <path d="M19 9l4 11-7 3z" fill="#b4b5b6" />
            <path d="M5 34L15 3l3 3-5 29z" fill="#8f171c" />
            <path d="M11 25l12-6 2 5-13 5z" fill="#e5484a" />
            <path d="M37 21h9l-4.500 5z" fill="#3c4148" />
          </svg>
        </AppButton>
        <HeaderRows>
          <TitleBar>
            {quick.map((q) => <Tool key={q} aria-label={q}><Icon name={q} size={23} /></Tool>)}
            <Tool $w={14} aria-label="放弃列表"><Caret /></Tool>
            <Tool aria-label="重做"><Icon name="redo" size={22} /></Tool>
            <Tool $w={16} aria-label="重做列表"><Caret fill="#8d9299" /></Tool>
            <Workspace>
              <Icon name="gear" size={23} />
              <PlainSelect aria-label="工作空间"><option>草图与注释</option></PlainSelect>
              <Caret w={10} />
            </Workspace>
            <Tool $w={20} aria-label="自定义">
              <svg width="10" height="10" viewBox="0 0 10 10" fill={G}><path d="M0 0h10v2H0zM0 4h10l-5 5z" /></svg>
            </Tool>
            <Title><span>Autodesk AutoCAD 2020</span><span>摇柄.dwg</span></Title>
            <Tool $w={14} aria-label="展开搜索">
              <svg width="5" height="10" viewBox="0 0 5 10" fill={G}><path d="M0 0l5 5-5 5z" /></svg>
            </Tool>
            <Search aria-label="搜索" placeholder="键入关键字或短语" />
            <Tool aria-label="搜索"><Icon name="find" size={20} /></Tool>
            <Tool aria-label="账户"><Icon name="user" size={20} /></Tool>
            <Login>登录</Login>
            <Tool $w={16} aria-label="登录菜单"><Caret /></Tool>
            <Tool $w={36} aria-label="应用商店"><Icon name="cart" size={20} /></Tool>
            <Tool $w={24} aria-label="A360"><Icon name="a360" size={20} /></Tool>
            <Tool $w={16} aria-label="A360 菜单"><Caret /></Tool>
            <Rule />
            <Tool $w={28} aria-label="帮助"><Icon name="help" size={22} /></Tool>
            <Tool $w={18} aria-label="帮助菜单"><Caret /></Tool>
            <WindowButtons>
              <Tool aria-label="最小化"><Icon name="min" /></Tool>
              <Tool aria-label="还原"><Icon name="restore" size={22} /></Tool>
              <Tool aria-label="关闭"><Icon name="close" /></Tool>
            </WindowButtons>
          </TitleBar>
          <Tabs>
            {tabs.map((t, i) => <Tab key={t} $on={i === 0} $latin={/^[A-Z]/.test(t)}>{t}</Tab>)}
            <RibbonToggle aria-label="最小化功能区">
              <svg width="18" height="10" viewBox="0 0 18 10"><rect width="18" height="10" rx="2" fill="#e6e7e8" /><path d="M5 7h8L9 3z" fill="#30353d" /></svg>
              <Caret />
            </RibbonToggle>
          </Tabs>
        </HeaderRows>
      </Header>

      <Ribbon>
        <Panel title="绘图" w={262} pad={0}>
          <Big icon="line" label={["直线"]} w={52} />
          <Big icon="pline" label={["多段线"]} w={48} />
          <Big icon="circle" label={["圆"]} w={52} drop />
          <Big icon="arc" label={["圆弧"]} w={54} drop />
          <Column $gap={4}>
            <Cmd icon="rect" drop={20} />
            <Cmd icon="ellipse" drop={20} />
            <Cmd icon="hatch" drop={20} />
          </Column>
        </Panel>
        <Panel title="修改" w={283}>
          <Column $w={75}>
            <Cmd icon="move" label="移动" />
            <Cmd icon="copy" label="复制" />
            <Cmd icon="stretch" label="拉伸" />
          </Column>
          <Column $w={74}>
            <Cmd icon="rotate" label="旋转" />
            <Cmd icon="mirror" label="镜像" />
            <Cmd icon="scale" label="缩放" />
          </Column>
          <Column $w={93}>
            <Cmd icon="trim" label="修剪" drop={34} />
            <Cmd icon="fillet" label="圆角" drop={34} />
            <Cmd icon="array" label="阵列" drop={26} />
          </Column>
          <Column>
            <Cmd icon="erase" />
            <Cmd icon="box" />
            <Cmd icon="offset" />
          </Column>
        </Panel>
        <Panel title="注释" w={195} pad={0}>
          <Big icon="text" label={["文字"]} w={63} drop />
          <Big icon="dim" label={["标注"]} w={43} />
          <Column $gap={4}>
            <Cmd icon="linear" label="线性" drop={26} />
            <Cmd icon="leader" label="引线" drop={26} />
            <Cmd icon="table" label="表格" />
          </Column>
        </Panel>
        <Panel title="图层" w={314}>
          <Big icon="layers" label={["图层", "特性"]} w={44} />
          <Column $gap={3}>
            <LayerCombo>
              <Icon name="bulb" size={22} />
              <Icon name="sunny" />
              <Icon name="unlock" />
              <Swatch $s={18} $l={5} $r={6} />
              <PlainSelect aria-label="图层"><option>轮廓线</option></PlainSelect>
              <Caret w={10} />
            </LayerCombo>
            <LayerIcons>
              <Item aria-label="关"><Icon name="layOff" /></Item>
              <Item aria-label="隔离"><Icon name="layIso" /></Item>
              <Item aria-label="冻结"><Icon name="layFreeze" /></Item>
              <Item aria-label="锁定"><Icon name="layLock" /></Item>
              <Item><Icon name="layCur" /><span>置为当前</span></Item>
            </LayerIcons>
            <LayerIcons>
              <Item aria-label="打开所有图层"><Icon name="layOn" /></Item>
              <Item aria-label="取消隔离"><Icon name="layUniso" /></Item>
              <Item aria-label="解冻"><Icon name="layThaw" /></Item>
              <Item aria-label="解锁"><Icon name="layUnlock" /></Item>
              <Item><Icon name="layMatch" /><span>匹配图层</span></Item>
            </LayerIcons>
          </Column>
        </Panel>
        <Panel title="块" w={167}>
          <Big icon="insert" label={["插入"]} w={44} drop />
          <Column $gap={4}>
            <Cmd icon="create" label="创建" />
            <Cmd icon="editBlock" label="编辑" />
            <Cmd icon="editAttr" label="编辑属性" drop={26} />
          </Column>
        </Panel>
        <Panel title="特性" w={304} launch>
          <Big icon="match" label={["特性", "匹配"]} w={44} />
          <Column $w={27} $gap={1}>
            <Cmd icon="wheel" />
            <Cmd icon="weights" />
            <Cmd icon="types" />
          </Column>
          <ComboCol>
            <Combo>
              <Swatch $s={20} $l={11} $r={12} />
              <PlainSelect aria-label="颜色"><option>ByLayer</option></PlainSelect>
              <Caret w={10} />
            </Combo>
            <Combo>
              <Stroke $h={4} />
              <PlainSelect aria-label="线宽"><option>ByLayer</option></PlainSelect>
              <Caret w={10} />
            </Combo>
            <Combo>
              <Stroke $h={1} />
              <PlainSelect aria-label="线型"><option>ByLayer</option></PlainSelect>
              <Caret w={10} />
            </Combo>
          </ComboCol>
        </Panel>
        <Panel title="组" w={84}>
          <Big icon="group" label={["组"]} w={44} />
          <Column $gap={3}>
            <Cmd icon="ungroup" />
            <Cmd icon="groupEdit" />
            <Cmd icon="groupSel" on />
          </Column>
        </Panel>
        <Panel title="实用工具" w={94}>
          <Big icon="measure" label={["测量"]} w={54} drop />
          <Column $gap={3}>
            <Cmd icon="qselect" />
            <Cmd icon="selAll" />
            <Cmd icon="calc" />
          </Column>
        </Panel>
        <Panel title="剪贴板" w={94} arrow={false}>
          <Big icon="paste" label={["粘贴"]} w={54} drop />
          <Column $gap={4}>
            <Cmd icon="cut" />
            <Cmd icon="copyClip" />
          </Column>
        </Panel>
        <Panel title="视图" w={76} launch>
          <Big icon="base" label={["基点"]} w={68} drop />
        </Panel>
      </Ribbon>

      <Workarea>
        <Drawing />
        <Edge />
        <ViewLabel>
          <button>[−]</button>
          <button>[俯视]</button>
          <button>[二维线框]</button>
        </ViewLabel>
        <ViewButtons>
          <Tool $w={25} aria-label="最小化视口">
            <svg width="14" height="12" viewBox="0 0 14 12"><path d="M0 7h14v4H0z" fill="#e4e5e6" /></svg>
          </Tool>
          <Tool $w={25} aria-label="还原视口">
            <svg width="14" height="14" viewBox="0 0 14 14" fill="none" stroke="#e4e5e6" strokeWidth="2"><path d="M4 2h9v9M2 5h8v8H2z" /></svg>
          </Tool>
          <Tool $w={25} aria-label="关闭视口">
            <svg width="14" height="14" viewBox="0 0 14 14" fill="none" stroke="#e4e5e6" strokeWidth="3"><path d="M2 2l10 10M12 2L2 12" /></svg>
          </Tool>
        </ViewButtons>
        <ViewCube />
        <Navigation />
        <Ucs width="90" height="90" viewBox="10 895 90 90" fill="none" stroke="#e8e9ea" aria-label="UCS">
          <path d="M15.500 916v62.500H78" />
          <g fill="#e8e9ea" stroke="none" fontFamily="Lato, sans-serif" fontWeight="300" fontSize="21" textAnchor="middle">
            <text x="24" y="912">Y</text>
            <text x="89" y="977">X</text>
          </g>
        </Ucs>
        <CommandLine>
          <Tool $w={12} aria-label="移动命令行">
            <svg width="6" height="22" viewBox="0 0 6 22" stroke="#b4b7bb" strokeWidth="2" strokeDasharray="2 2"><path d="M1 0v22M5 0v22" /></svg>
          </Tool>
          <Tool $w={25} aria-label="关闭命令行"><Icon name="close" size={22} /></Tool>
          <Tool $w={33} aria-label="自定义命令行"><Icon name="wrench" size={20} /></Tool>
          <CommandField>
            <Icon name="prompt" size={22} />
            <Caret w={10} fill="#55585c" />
            <CommandInput aria-label="命令" placeholder="键入命令" />
            <svg width="10" height="6" viewBox="0 0 10 6"><path d="M0 6h10L5 0z" fill="#55585c" /></svg>
          </CommandField>
        </CommandLine>
      </Workarea>
      <StatusBar />
    </Shell>
  );
}
